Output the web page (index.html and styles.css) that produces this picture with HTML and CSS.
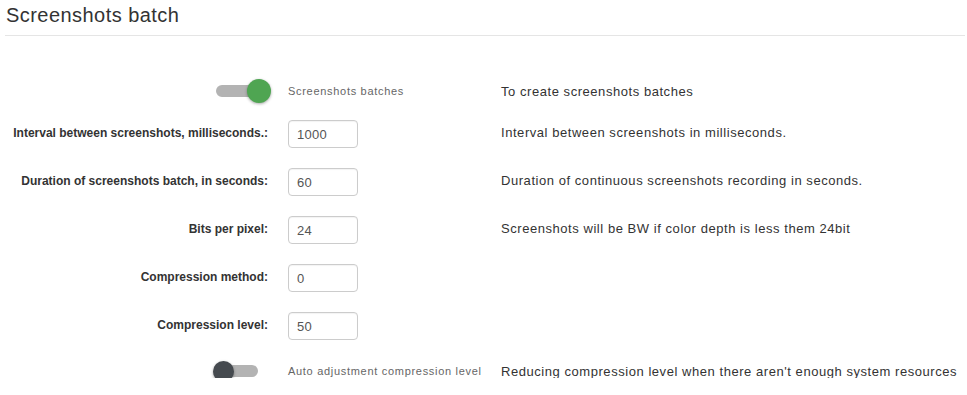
FILE: index.html
```html
<!DOCTYPE html>
<html lang="en">
<head>
    <meta charset="UTF-8">
    <title>Screenshots batch</title>
    <link rel="stylesheet" href="styles.css">
</head>
<body>
<div class="panel">
    <h3 class="title">Screenshots batch</h3>

    <div class="form">
        <div class="row row-switch first">
            <div class="label">
                <span class="switch on"><span class="track"></span><span class="knob"></span></span>
            </div>
            <div class="control switch-text">Screenshots batches</div>
            <div class="help">To create screenshots batches</div>
        </div>

        <div class="row">
            <div class="label">Interval between screenshots, milliseconds.:</div>
            <div class="control"><input class="field" type="text" value="1000"></div>
            <div class="help">Interval between screenshots in milliseconds.</div>
        </div>

        <div class="row">
            <div class="label">Duration of screenshots batch, in seconds:</div>
            <div class="control"><input class="field" type="text" value="60"></div>
            <div class="help">Duration of continuous screenshots recording in seconds.</div>
        </div>

        <div class="row">
            <div class="label">Bits per pixel:</div>
            <div class="control"><input class="field" type="text" value="24"></div>
            <div class="help">Screenshots will be BW if color depth is less them 24bit</div>
        </div>

        <div class="row">
            <div class="label">Compression method:</div>
            <div class="control"><input class="field" type="text" value="0"></div>
            <div class="help"></div>
        </div>

        <div class="row">
            <div class="label">Compression level:</div>
            <div class="control"><input class="field" type="text" value="50"></div>
            <div class="help"></div>
        </div>

        <div class="row row-switch">
            <div class="label">
                <span class="switch"><span class="track"></span><span class="knob"></span></span>
            </div>
            <div class="control switch-text">Auto adjustment compression level</div>
            <div class="help">Reducing compression level when there aren't enough system resources</div>
        </div>
    </div>
</div>
</body>
</html>
```

FILE: styles.css
```css
body {
    margin: 0;
    background: #ffffff;
    font-family: "Liberation Sans", Arial, sans-serif;
    color: #333333;
}

.panel {
    padding: 0 2px 0 5px;
}

.title {
    margin: 0;
    padding: 5px 0 9px 1px;
    font-size: 20px;
    font-weight: normal;
    line-height: 21px;
    letter-spacing: 0.45px;
    color: #333333;
    border-bottom: 1px solid #e5e5e5;
}

.form {
    display: flex;
    flex-direction: column;
    gap: 20px;
    padding-top: 44px;
}

.row {
    display: grid;
    grid-template-columns: 283px 213px 1fr;
    align-items: center;
    height: 28px;
}

.row-switch {
    height: 18px;
}

.row-switch.first {
    margin-bottom: 2px;
}

.label {
    padding-right: 20px;
    padding-bottom: 3px;
    text-align: right;
    font-size: 12px;
    font-weight: bold;
    color: #333333;
    display: flex;
    justify-content: flex-end;
}

.row-switch .label {
    padding-bottom: 0;
}

.help {
    padding-bottom: 3px;
    font-size: 13px;
    letter-spacing: 0.55px;
    color: #333333;
}

.row-switch .help {
    padding-bottom: 0;
}

.field {
    box-sizing: border-box;
    width: 70px;
    height: 28px;
    padding: 0 8px;
    border: 1px solid #cccccc;
    border-radius: 4px;
    font-family: "Liberation Sans", Arial, sans-serif;
    font-size: 13px;
    letter-spacing: 0.3px;
    color: #555555;
    box-shadow: inset 0 1px 1px rgba(0, 0, 0, .05);
}

.switch-text {
    font-size: 11px;
    letter-spacing: 0.7px;
    color: #666666;
}

/* switch */
.switch {
    position: relative;
    display: block;
    width: 42px;
    height: 22px;
    margin-right: 10px;
}

.switch .track {
    position: absolute;
    left: 0;
    right: 0;
    top: 5px;
    height: 12px;
    border-radius: 6px;
    background: #b3b3b3;
}

.switch .knob {
    position: absolute;
    top: 1px;
    left: -3px;
    width: 21px;
    height: 21px;
    border-radius: 50%;
    background: #454a4f;
    box-shadow: 0 1px 3px rgba(0, 0, 0, .35);
}

.switch.on .knob {
    left: 31px;
    width: 24px;
    height: 24px;
    top: -1px;
    background: #4fa552;
}
```
